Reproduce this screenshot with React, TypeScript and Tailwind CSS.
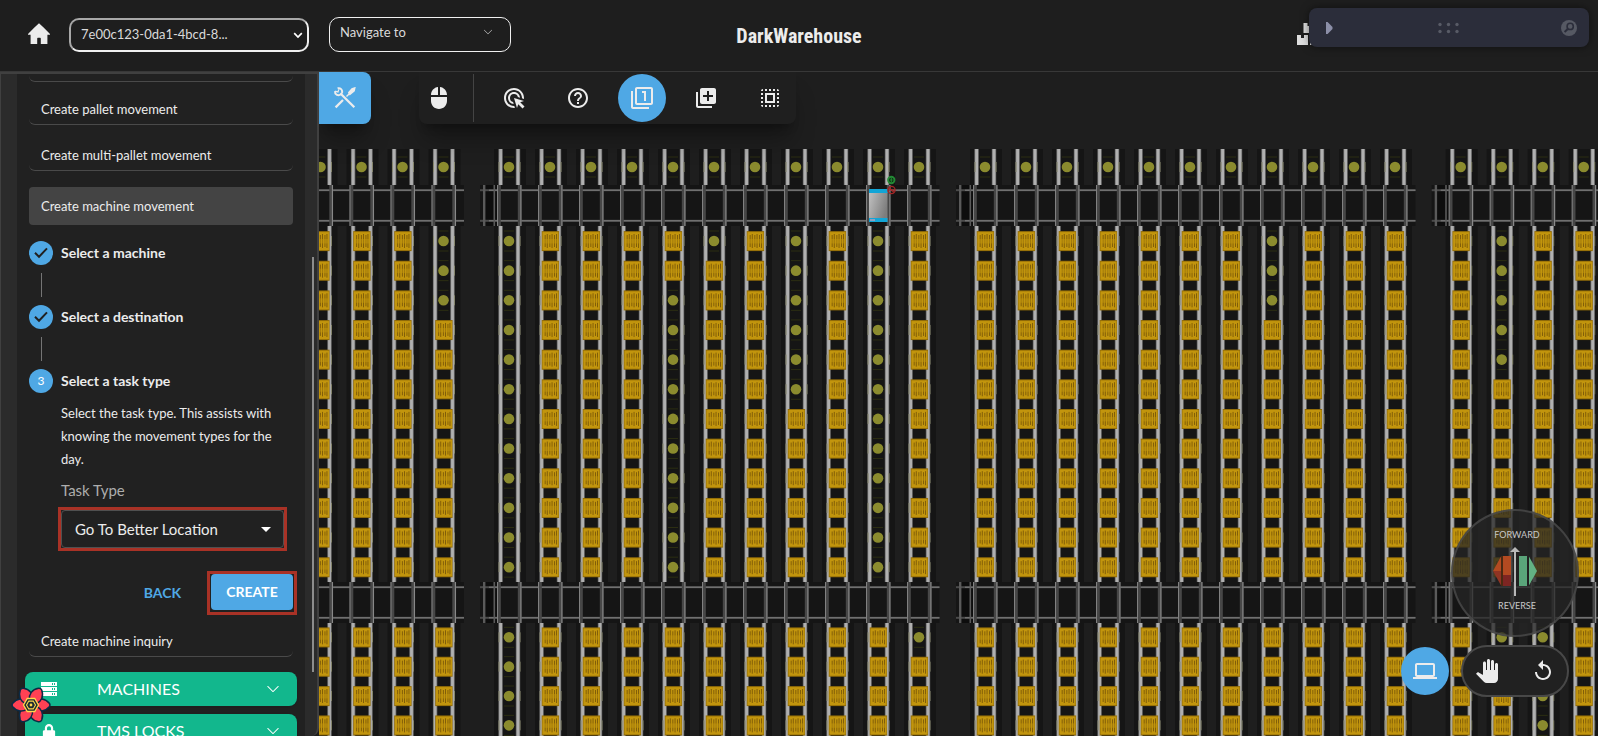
import React from "react";
import {
  MdAddToPhotos,
  MdAdsClick,
  MdHelpOutline,
  MdMouse,
  MdOutlineFilter1,
  MdOutlineLaptop,
  MdPanTool,
  MdReplay,
  MdSelectAll,
} from "react-icons/md";
import { BsChevronDown } from "react-icons/bs";
import { FaLock } from "react-icons/fa";

/* ---------- warehouse map ---------- */

const PITCH = 41;
const UPPER_ROWS = 12;
const LOWER_ROWS = 4;

type Block = {
  x: number;
  columns: number;
  upperEmpty: Record<number, number[]>;
  lowerEmpty: Record<number, number[]>;
};

const range = (from: number, to: number) =>
  Array.from({ length: to - from + 1 }, (_, i) => from + i);

const BLOCKS: Block[] = [
  { x: -39.5, columns: 5, upperEmpty: { 4: [0, 1, 2] }, lowerEmpty: {} },
  {
    x: 190,
    columns: 11,
    upperEmpty: {
      0: range(0, 11),
      4: range(2, 11),
      5: [0],
      7: range(0, 5),
      9: range(0, 11),
    },
    lowerEmpty: { 0: range(0, 3), 10: [0] },
  },
  { x: 666, columns: 11, upperEmpty: { 7: [0, 1, 2] }, lowerEmpty: {} },
  {
    x: 1141.7,
    columns: 11,
    upperEmpty: { 1: range(0, 4) },
    lowerEmpty: { 1: [0], 2: range(0, 3) },
  },
];

function Slot() {
  return (
    <g>
      <rect x="-5" y="-10.5" width="10" height="1" fill="#2c2e12" />
      <rect x="-5" y="9.5" width="10" height="1" fill="#2c2e12" />
      <rect x="-10.5" y="-5" width="1" height="10" fill="#85856c" />
      <rect x="10.5" y="-5" width="1" height="10" fill="#85856c" />
      <circle r="5.3" fill="#8b8b2e" />
    </g>
  );
}

function Pallet() {
  return (
    <g>
      <rect x="-10.5" y="-5" width="1" height="10" fill="#85856c" />
      <rect x="10.5" y="-5" width="1" height="10" fill="#85856c" />
      <rect x="-8.3" y="-9.9" width="17.4" height="20" fill="#946e08" />
      <rect x="-7.5" y="-8.9" width="16" height="18" fill="#c2950d" />
      {[-5.3, -3.2, -0.6, 1.6, 4, 6].map((x, i) => (
        <rect
          key={x}
          x={x}
          y={i % 2 ? -7 : -6}
          width="0.9"
          height={i % 2 ? 14 : 12}
          fill="#7a5808"
        />
      ))}
      <rect x="-7.4" y="-2" width="15.8" height="4.5" fill="#c2950d" opacity="0.5" />
    </g>
  );
}

function Rails({ y, height }: { y: number; height: number }) {
  return (
    <g>
      <rect x="-15" y={y} width="32" height={height} fill="#151515" />
      <rect x="-10.6" y={y} width="4.4" height={height} fill="#6f6f6f" />
      <rect x="-9.8" y={y} width="2.8" height={height} fill="#b0b0b0" />
      <rect x="6.8" y={y} width="4.4" height={height} fill="#6f6f6f" />
      <rect x="7.6" y={y} width="2.8" height={height} fill="#b0b0b0" />
    </g>
  );
}

function Aisle({ block, y }: { block: Block; y: number }) {
  const width = (block.columns - 1) * PITCH + 49.5;
  return (
    <g transform={`translate(${block.x} ${y})`}>
      <rect x="-29" width={width} height="41" fill="#151515" />
      <rect x="-24" width="13" height="41" fill="#0d0d0d" />
      {[5, 35.6].map((line) => (
        <g key={line}>
          <rect x="-29" y={line - 0.8} width={width} height="2" fill="#4a4a4a" />
          <rect x="-20" y={line - 0.3} width={width - 9} height="1" fill="#808080" />
        </g>
      ))}
      <rect x="-26" width="2.4" height="41" fill="#5a5a5a" />
      <rect x="-15.5" width="1.6" height="41" fill="#5a5a5a" />
      {range(0, block.columns - 1).map((c) => (
        <g key={c} transform={`translate(${c * PITCH} 0)`}>
          <rect x="-12" width="3.8" height="41" fill="#474747" />
          <rect x="-12" width="1" height="41" fill="#808080" />
          <rect x="8.8" width="3.8" height="41" fill="#474747" />
          <rect x="11.4" width="1" height="41" fill="#909090" />
        </g>
      ))}
    </g>
  );
}

function WarehouseMap() {
  return (
    <svg
      className="absolute left-0 top-0"
      width="1640"
      height="700"
      viewBox="0 0 1640 700"
      role="img"
      aria-label="Warehouse map"
    >
      {BLOCKS.map((block) => (
        <g key={block.x}>
          {range(0, block.columns - 1).map((c) => (
            <g key={c} transform={`translate(${block.x + c * PITCH} 0)`}>
              <Rails y={77} height={36} />
              <Rails y={154} height={356} />
              <Rails y={551} height={149} />
              <g transform="translate(0 95)">
                <Slot />
              </g>
              {range(0, UPPER_ROWS - 1).map((r) => (
                <g key={r} transform={`translate(0 ${169 + r * 29.65})`}>
                  {block.upperEmpty[c]?.includes(r) ? <Slot /> : <Pallet />}
                </g>
              ))}
              {range(0, LOWER_ROWS - 1).map((r) => (
                <g key={r} transform={`translate(0 ${565.3 + r * 29.35})`}>
                  {block.lowerEmpty[c]?.includes(r) ? <Slot /> : <Pallet />}
                </g>
              ))}
            </g>
          ))}
          <Aisle block={block} y={113} />
          <Aisle block={block} y={510} />
        </g>
      ))}
      {/* shuttle */}
      <defs>
        <linearGradient id="shuttle" x1="0" y1="0" x2="1" y2="0.5">
          <stop offset="0" stopColor="#c4c4c4" />
          <stop offset="1" stopColor="#7d7d7d" />
        </linearGradient>
      </defs>
      <rect x="550" y="117" width="18.5" height="33" fill="url(#shuttle)" />
      <rect x="550" y="117" width="18.5" height="4" fill="#12a5d6" />
      <rect x="550" y="146" width="18.5" height="4" fill="#12a5d6" />
      <rect x="551" y="147" width="5" height="2" fill="#8f9fc0" />
      <circle cx="572.3" cy="108" r="3.2" fill="#0d2c12" stroke="#238a35" strokeWidth="1.9" />
      <path d="M572.3 106v4M571 108h2.6" stroke="#238a35" strokeWidth="1" />
      <circle cx="572.5" cy="118" r="3.6" fill="none" stroke="#a32626" strokeWidth="1.3" />
      <path d="M569 118h7M570 115.500l5 5" stroke="#a32626" strokeWidth="1.1" />
    </svg>
  );
}

/* ---------- icons ---------- */

function HomeIcon() {
  return (
    <svg width="22" height="21" viewBox="0 0 22 21" fill="#ececec" aria-hidden="true">
      <path d="M11 0.3 15.6 4.6 22 11v0.8h-2.6V21h-6.6v-5.2c0-.6-.4-1-1-1h-1.6c-.6 0-1 .4-1 1V21H2.6v-9.2H0V11L6.4 4.6z" />
    </svg>
  );
}

function ToolsIcon() {
  return (
    <svg width="22" height="22" viewBox="0 0 22 22" fill="none" stroke="#ececec" aria-hidden="true">
      <path d="M6.5 6.500 20.300 20.300" strokeWidth="2.3" />
      <path d="M3.600 1.300C6.400.6 8.700 2.800 8 5.600 7.200 8.500 3.600 9.100 1.400 6.600L1 4.200" strokeWidth="2" />
      <path d="M1.200 4.200 4 5l.8-2.600" strokeWidth="1.2" />
      <path d="M1.600 20.400 9 13" strokeWidth="2.2" />
      <path d="M12.500 9.500 16 6" strokeWidth="1.4" />
      <path d="M14.900 5.600 18 1.900 20.700 1l-.6 2.800-4.200 3.400z" fill="#ececec" strokeWidth="1.6" />
    </svg>
  );
}

function RackIcon() {
  return (
    <svg width="26" height="24" viewBox="0 0 26 24" fill="#dedede" aria-hidden="true">
      <path d="M6.500 1h4v3h3V1h4v10h-11zM0 13h4v3h3v-3h4v10H0zM13 13h4v3h3v-3h4v10H13z" />
    </svg>
  );
}

function ServerIcon() {
  return (
    <svg width="16" height="14" viewBox="0 0 16 14" aria-hidden="true">
      {[0, 5, 10].map((y) => (
        <g key={y}>
          <rect y={y} width="16" height="4" fill="#fff" />
          <rect x="11" y={y + 1} width="1" height="2" fill="#12b78d" />
          <rect x="13" y={y + 1} width="1" height="2" fill="#12b78d" />
        </g>
      ))}
    </svg>
  );
}

function CheckIcon() {
  return (
    <svg width="14" height="12" viewBox="0 0 14 12" fill="none" stroke="#212121" strokeWidth="2" aria-hidden="true">
      <path d="M1 5.8 5 9.8 13 1.4" />
    </svg>
  );
}

function FlowerLogo() {
  return (
    <svg width="40" height="38" viewBox="-20 -19 40 38" aria-hidden="true">
      {[0, 60, 120, 180, 240, 300].map((a) => (
        <path
          key={a}
          transform={`rotate(${a})`}
          d="M4 -4C8 -7.200 14 -7 18.300 -1.800Q19.600 0 18.300 1.800C14 7 8 7.200 4 4z"
          fill="#ff4154"
          stroke="#0b2a45"
          strokeWidth="1.5"
        />
      ))}
      <path d="M-7.500 0-3.750-6.500h7.500L7.500 0 3.750 6.500h-7.500z" fill="#1c2b33" stroke="#ffd94c" strokeWidth="1.3" />
      <path d="M-4.500 0-2.250-3.900h4.500L4.500 0 2.250 3.900h-4.500z" fill="#1c2b33" stroke="#ffd94c" strokeWidth="1.1" />
      <circle r="1.400" fill="#ffd94c" />
    </svg>
  );
}

/* ---------- header ---------- */

function Header() {
  return (
    <header className="relative z-20 flex h-[72px] shrink-0 items-center border-b border-[#383838] bg-[#1e1e1e] pl-7">
      <a href="#home" aria-label="Home" className="mb-1">
        <HomeIcon />
      </a>
      <div className="relative mb-0.5 ml-[19px] w-60">
        <select
          aria-label="Warehouse"
          className="h-[34px] w-full appearance-none rounded-[10px] border-2 border-[#f0f0f0] border-l-[#a8a8a8] border-t-[#a8a8a8] bg-[#1e1e1e] pl-2.5 text-[13px] text-[#dadada]"
        >
          <option>7e00c123-0da1-4bcd-8...</option>
        </select>
        <svg className="pointer-events-none absolute right-1.5 top-[14px]" width="10" height="7" viewBox="0 0 10 7" fill="none" stroke="#fff" strokeWidth="1.7">
          <path d="M1.2 1.2 5 5l3.8-3.8" />
        </svg>
      </div>
      <div className="relative mb-0.5 ml-5 w-[182px]">
        <select
          aria-label="Navigate to"
          className="h-[35px] w-full appearance-none rounded-[10px] border border-[#f0f0f0] bg-[#1e1e1e] pb-1 pl-2.5 text-[13px] text-[#dadada]"
        >
          <option>Navigate to</option>
        </select>
        <BsChevronDown className="pointer-events-none absolute right-[18px] top-2.5 size-2.5 text-[#dadada]" />
      </div>
      <h1 className="absolute left-1/2 top-[21px] -translate-x-1/2 font-['Liberation_Sans_Narrow','Roboto_Condensed',sans-serif] text-xl leading-[30px] font-bold text-[#ececec]">
        DarkWarehouse
      </h1>
      <div className="ml-auto mr-[275px] mb-1">
        <RackIcon />
      </div>
      <div className="absolute right-[9px] top-2 flex h-[39px] w-[280px] items-center justify-between rounded-lg bg-[#2b2d3a] pl-[17px] pr-3 shadow-[0_0_8px_rgba(0,0,0,0.5)]">
        <button aria-label="Expand panel">
          <svg width="7" height="12" viewBox="0 0 7 12" fill="#8c8fa8">
            <path d="M0 0h1.6L6.5 5v2L1.6 12H0z" />
          </svg>
        </button>
        <svg className="ml-1" width="22" height="12" viewBox="0 0 22 12" fill="#585b66">
          {[2, 10.5, 19].map((x) => (
            <g key={x}>
              <circle cx={x} cy="2.5" r="1.7" />
              <circle cx={x} cy="9.5" r="1.7" />
            </g>
          ))}
        </svg>
        <button aria-label="Search">
          <svg width="16" height="16" viewBox="0 0 16 16">
            <circle cx="8" cy="8" r="8" fill="#565963" />
            <circle cx="9.2" cy="6.4" r="3.1" fill="none" stroke="#2b2d3a" strokeWidth="1.6" />
            <path d="M7 8.8 3.6 12" stroke="#2b2d3a" strokeWidth="2" />
          </svg>
        </button>
      </div>
    </header>
  );
}

/* ---------- sidebar ---------- */

function Step({ label, children }: { label: string; children: React.ReactNode }) {
  return (
    <div className="flex h-6 items-center gap-2">
      <span className="flex size-6 items-center justify-center rounded-full bg-[#4fa8e5] text-xs text-white">
        {children}
      </span>
      <span className="text-sm font-bold text-[#ececec]">{label}</span>
    </div>
  );
}

function Connector() {
  return <div className="my-2 ml-3 h-6 w-px bg-[#757575]" />;
}

const itemClass =
  "block h-[38px] w-full rounded-md border-b border-[#4a4a4a] px-3 pt-2 text-left text-[13px] text-[#ececec]";
const sectionClass =
  "flex h-[34px] w-[272px] shrink-0 items-center rounded-lg bg-[#12b78d] pl-4 pr-[17px] text-white shadow";

function Sidebar() {
  return (
    <aside className="relative z-10 w-[319px] shrink-0 overflow-hidden rounded-br-lg border-r-2 border-l border-t-2 border-[#404040] bg-[#2b2b2b] pl-4 pr-3">
      <div className="h-full w-72 overflow-hidden bg-[#212121] px-3">
        <div className="h-2 rounded-b-md border-b border-[#4a4a4a]" />
        <button className={`${itemClass} mt-[5px]`}>Create pallet movement</button>
        <button className={`${itemClass} mt-2`}>Create multi-pallet movement</button>
        <button className="mt-4 block h-[38px] w-full rounded bg-[#444] px-3 pt-0.5 text-left text-[13px] text-[#ececec]">
          Create machine movement
        </button>
        <div className="mt-4">
          <Step label="Select a machine">
            <CheckIcon />
          </Step>
          <Connector />
          <Step label="Select a destination">
            <CheckIcon />
          </Step>
          <Connector />
          <Step label="Select a task type">3</Step>
        </div>
        <div className="pl-8">
          <p className="mt-[9px] text-[13px] leading-[23px] text-[#ececec]">
            Select the task type. This assists with knowing the movement types for the day.
          </p>
          <label htmlFor="task-type" className="mt-[7px] block text-[15px] leading-6 text-[#adadad]">
            Task Type
          </label>
        </div>
        <div className="relative ml-[29px] mt-[5px] w-[229px] border-[3px] border-[#a93226]">
          <select
            id="task-type"
            className="block h-[38px] w-full appearance-none rounded border border-[#505050] bg-[#212121] pl-[13px] text-[15px] text-[#ececec]"
          >
            <option>Go To Better Location</option>
          </select>
          <svg className="pointer-events-none absolute right-[13px] top-[17px]" width="10" height="5" viewBox="0 0 10 5" fill="#fff">
            <path d="M0 0h10L5 5z" />
          </svg>
        </div>
        <div className="-mr-1 mt-5 flex items-center justify-end gap-[26px]">
          <button className="text-sm font-bold text-[#4fa8e5]">BACK</button>
          <div className="border-[3px] border-[#a93226] px-px pb-0.5">
            <button className="block h-9 w-[82px] rounded bg-[#4fa8e5] text-sm font-bold text-white">
              CREATE
            </button>
          </div>
        </div>
        <button className={`${itemClass} mt-1`}>Create machine inquiry</button>
        <div className="-mx-1 mt-[15px] flex flex-col gap-2">
          <button className={sectionClass}>
            <ServerIcon />
            <span className="ml-10 flex-1 text-left text-base">MACHINES</span>
            <BsChevronDown className="size-3.5" />
          </button>
          <button className={sectionClass}>
            <FaLock className="ml-px size-3.5" />
            <span className="ml-[41px] flex-1 text-left text-base">TMS LOCKS</span>
            <BsChevronDown className="size-3.5" />
          </button>
        </div>
      </div>
      <div className="absolute right-[3px] top-[183px] h-[415px] w-0.5 bg-[#8c8c8c]" />
      <button aria-label="Developer tools" className="absolute bottom-3 left-[10px]">
        <FlowerLogo />
      </button>
    </aside>
  );
}

/* ---------- map overlays ---------- */

function ToolButton({
  label,
  active,
  children,
}: {
  label: string;
  active?: boolean;
  children: React.ReactNode;
}) {
  return (
    <button
      aria-label={label}
      className={`flex size-12 items-center justify-center rounded-full ${active ? "bg-[#4fa8e5]" : ""}`}
    >
      {children}
    </button>
  );
}

function Toolbar() {
  return (
    <div className="relative flex items-start text-[#ececec]">
      <button
        aria-label="Tools"
        className="flex size-[52px] items-center justify-center rounded-r-lg bg-[#4fa8e5] shadow-xl shadow-black/30"
      >
        <ToolsIcon />
      </button>
      <div className="ml-12 flex h-[52px] items-center rounded-b-lg bg-[#1f1f1f] pl-2 pr-0.5 shadow-xl shadow-black/30">
        <button aria-label="Mouse mode">
          <MdMouse className="size-6" />
        </button>
        <div className="ml-[22px] mr-4 h-12 w-px bg-[#444]" />
        <div className="flex gap-4">
          <ToolButton label="Click select">
            <MdAdsClick className="size-6" />
          </ToolButton>
          <ToolButton label="Help">
            <MdHelpOutline className="size-6" />
          </ToolButton>
          <ToolButton label="Single select" active>
            <MdOutlineFilter1 className="size-6" />
          </ToolButton>
          <ToolButton label="Add to selection">
            <MdAddToPhotos className="size-6" />
          </ToolButton>
          <ToolButton label="Area select">
            <MdSelectAll className="size-6" />
          </ToolButton>
        </div>
      </div>
    </div>
  );
}

function Compass() {
  return (
    <div className="flex size-32 flex-col items-center rounded-full border-2 border-[#505050]/70 bg-[#262626]/75 pl-1 pt-4 text-[9px] leading-4 text-[#c8c8c8]">
      <span>FORWARD</span>
      <svg className="mb-0.5 mr-1 mt-1" width="44" height="49" viewBox="0 0 44 49" aria-hidden="true">
        <path d="M0 24 8 9.500V24z" fill="#b34a21" />
        <path d="M0 24h8v14.500z" fill="#8f3423" />
        <rect x="8" y="9" width="2" height="30" fill="#4a2a12" />
        <rect x="10" y="9" width="8" height="19" fill="#b34a21" />
        <rect x="10" y="28" width="8" height="11" fill="#7d2522" />
        <rect x="26" y="9" width="8" height="30" fill="#5aa57a" />
        <path d="M36 9.500 44 24 36 38.500z" fill="#63b283" />
        <path d="M22 3v46" stroke="#b8b8b8" strokeWidth="2" />
        <path d="M17 5 22 0l5 5z" fill="#b8b8b8" />
      </svg>
      <span>REVERSE</span>
    </div>
  );
}

export default function App() {
  return (
    <div className="flex h-screen flex-col overflow-hidden bg-[#1e1e1e] font-['Lato','Open_Sans',sans-serif]">
      <Header />
      <div className="flex min-h-0 flex-1">
        <Sidebar />
        <main className="relative min-w-0 flex-1 overflow-hidden bg-[#1e1e1e]">
          <WarehouseMap />
          <Toolbar />
          <div className="absolute bottom-[99px] right-[19px]">
            <Compass />
          </div>
          <div className="absolute bottom-[39px] right-[29px] flex items-center gap-3 text-[#ececec]">
            <button
              aria-label="Screen view"
              className="flex size-12 items-center justify-center rounded-full bg-[#4fa8e5]"
            >
              <MdOutlineLaptop className="size-6" />
            </button>
            <div className="flex h-[52px] w-[108px] items-center justify-between rounded-full border-2 border-[#484848] bg-[#212121] px-3">
              <button aria-label="Pan">
                <MdPanTool className="size-6" />
              </button>
              <button aria-label="Reset view">
                <MdReplay className="size-6" />
              </button>
            </div>
          </div>
        </main>
      </div>
    </div>
  );
}
